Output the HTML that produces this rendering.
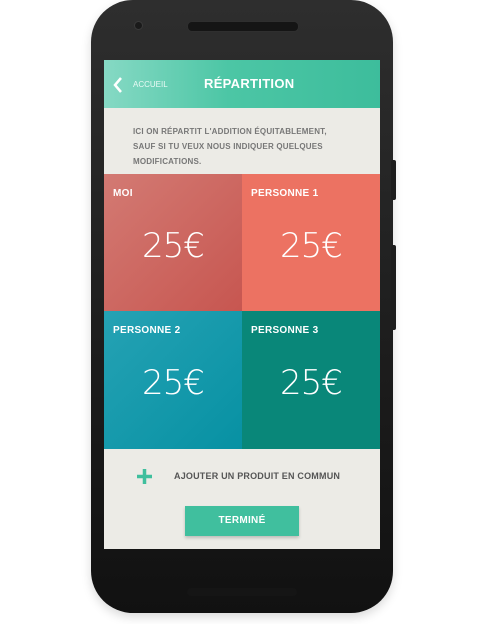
<!DOCTYPE html><html><head><style>
body{margin:0;width:487px;height:624px;background:#fff;position:relative;overflow:hidden;font-family:"Liberation Sans",sans-serif}
.ph{position:absolute;left:91px;top:0;width:302px;height:613px;border-radius:42px;background:linear-gradient(#2e2e2e,#1c1c1c 60%,#111);box-shadow:0 4px 10px rgba(0,0,0,.15)}
.btn{position:absolute;left:391px;width:5px;background:#1e1e1e;border-radius:2px}
.scr{position:absolute;left:104px;top:60px;width:276px;height:489px;background:#ecebe6;overflow:hidden}
.hd{height:48px;background:linear-gradient(90deg,#86d9c4,#4cc6a5 45%,#3dbd9c);color:#fff;position:relative}
.tile{position:absolute;width:138px;height:138px;color:#fff}
.tile b{position:absolute;left:9px;top:14px;font-size:10px;letter-spacing:.3px}
.tile span{position:absolute;left:0;right:0;top:52px;text-align:center;font-size:34px;font-family:"DejaVu Sans",sans-serif;font-weight:200;letter-spacing:-1px}
</style></head><body>
<div class="ph"></div>
<div class="btn" style="top:160px;height:40px"></div>
<div class="btn" style="top:245px;height:85px"></div>
<div style="position:absolute;left:134px;top:21px;width:7px;height:7px;border-radius:50%;background:#1a1a1a;border:1px solid #3a3a3a"></div>
<div style="position:absolute;left:187px;top:21px;width:110px;height:9px;border-radius:5px;background:#151515;border:1px solid #2f2f2f"></div>
<div style="position:absolute;left:187px;top:588px;width:110px;height:8px;border-radius:4px;background:#151515"></div>
<div class="scr">
<div class="hd">
<svg style="position:absolute;left:9px;top:17px" width="10" height="16"><path d="M8 1L2 8l6 7" stroke="#fff" stroke-width="2.5" fill="none"/></svg>
<div style="position:absolute;left:29px;top:20px;font-size:8px;color:#eafaf5">ACCUEIL</div>
<div style="position:absolute;left:100px;top:16px;font-size:13px;font-weight:bold;letter-spacing:.3px">RÉPARTITION</div>
</div>
<div style="position:absolute;left:29px;top:64px;font-size:8px;line-height:15px;color:#777;font-weight:bold;letter-spacing:.2px">ICI ON RÉPARTIT L'ADDITION ÉQUITABLEMENT,<br>SAUF SI TU VEUX NOUS INDIQUER QUELQUES<br>MODIFICATIONS.</div>
<div class="tile" style="left:0;top:114px;background:linear-gradient(135deg,#d37a73,#c75650)"><b>MOI</b><span>25€</span></div>
<div class="tile" style="left:138px;top:114px;background:#ec7262"><b>PERSONNE 1</b><span>25€</span></div>
<div class="tile" style="left:0;top:251px;height:138px;background:linear-gradient(135deg,#25a2b4,#0791a3)"><b>PERSONNE 2</b><span>25€</span></div>
<div class="tile" style="left:138px;top:251px;height:138px;background:#098779"><b>PERSONNE 3</b><span>25€</span></div>
<svg style="position:absolute;left:33px;top:409px" width="15" height="15"><path d="M7.5 0v15M0 7.5h15" stroke="#3fbf9d" stroke-width="3.5"/></svg>
<div style="position:absolute;left:70px;top:411px;font-size:9px;color:#555;font-weight:bold;letter-spacing:.2px">AJOUTER UN PRODUIT EN COMMUN</div>
<div style="position:absolute;left:81px;top:446px;width:114px;height:30px;background:#40bf9e;box-shadow:0 2px 3px rgba(0,0,0,.2);color:#fff;font-weight:bold;font-size:10px;text-align:center;line-height:30px;letter-spacing:.3px">TERMINÉ</div>
</div>
</body></html>
